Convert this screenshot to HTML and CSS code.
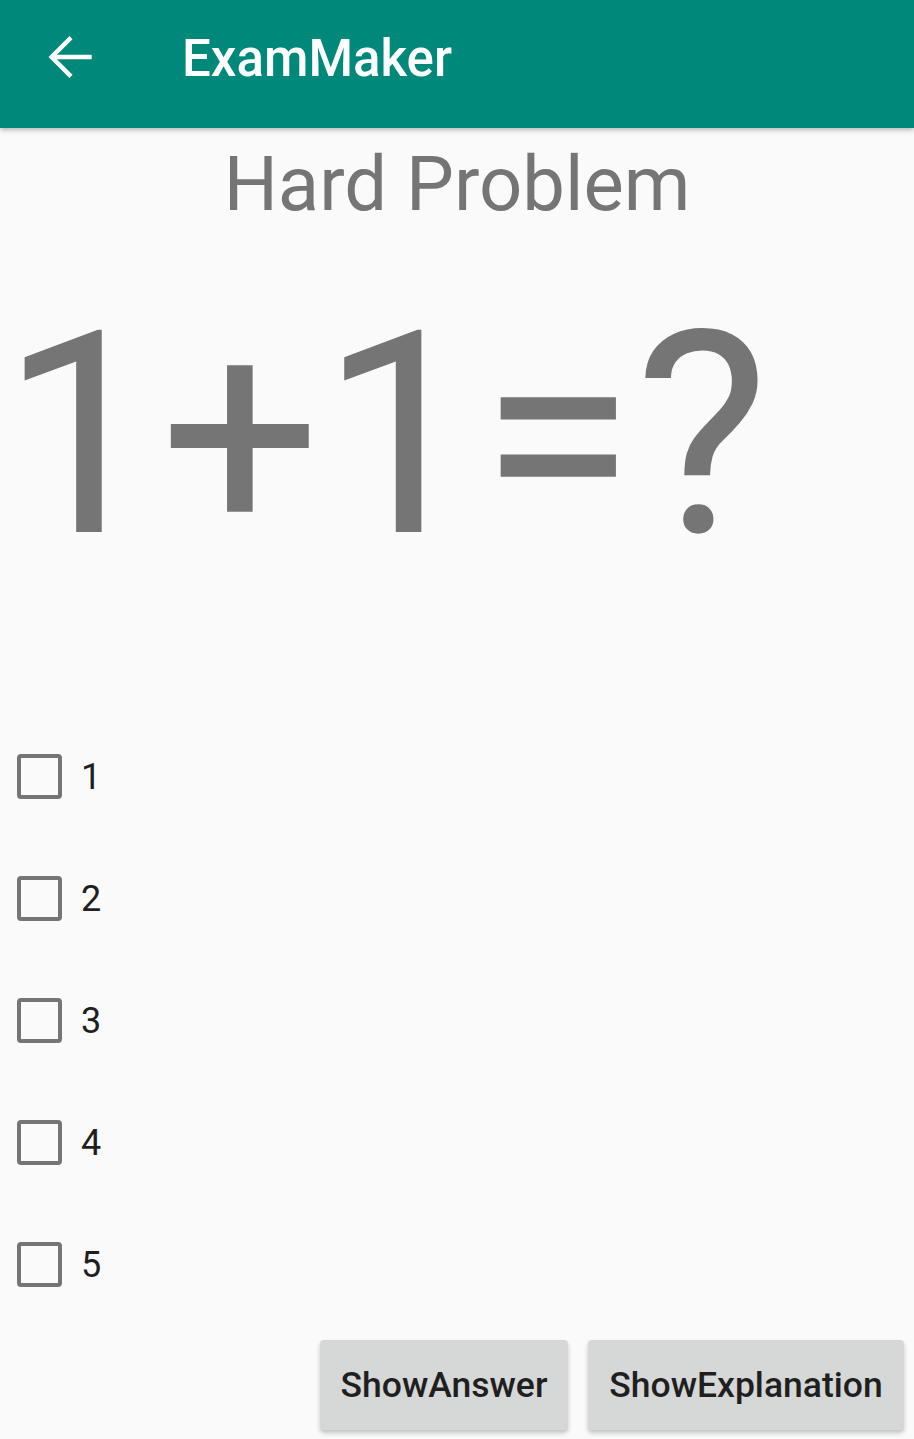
FILE: index.html
```html
<!DOCTYPE html>
<html>
<head>
<meta charset="utf-8">
<link rel="stylesheet" href="styles.css">
</head>
<body>
<div class="screen">
  <header class="appbar">
    <span class="back">
      <svg width="62" height="62" viewBox="0 0 24 24"><path d="M20 12H4.8M12 4.5L4.5 12L12 19.5" fill="none" stroke="#fff" stroke-width="1.7"/></svg>
    </span>
    <span class="title">ExamMaker</span>
  </header>
  <main class="content">
    <h1 class="heading">Hard Problem</h1>
    <div class="question">1+1=?</div>
    <ul class="options">
      <li class="option"><span class="box"></span><span class="label">1</span></li>
      <li class="option"><span class="box"></span><span class="label">2</span></li>
      <li class="option"><span class="box"></span><span class="label">3</span></li>
      <li class="option"><span class="box"></span><span class="label">4</span></li>
      <li class="option"><span class="box"></span><span class="label">5</span></li>
    </ul>
    <div class="actions">
      <button class="btn btn-answer">ShowAnswer</button>
      <button class="btn btn-expl">ShowExplanation</button>
    </div>
  </main>
</div>
</body>
</html>
```

FILE: styles.css
```css
html, body {
  margin: 0;
  padding: 0;
}
body {
  background: #fafafa;
  font-family: Roboto, "Liberation Sans", sans-serif;
  width: 914px;
  height: 1439px;
  overflow: hidden;
}
.screen {
  display: flex;
  flex-direction: column;
  height: 1439px;
}
.appbar {
  height: 128px;
  background: #00897b;
  display: flex;
  align-items: center;
  box-shadow: 0 2px 5px rgba(0,0,0,0.28);
  position: relative;
  z-index: 1;
  flex-shrink: 0;
}
.back {
  width: 62px;
  height: 62px;
  margin-left: 40px;
  margin-top: -14px;
  display: flex;
}
.title {
  margin-left: 80px;
  color: #fff;
  font-weight: 500;
  font-size: 51px;
  margin-top: -12px;
}
.content {
  flex: 1;
  display: flex;
  flex-direction: column;
}
.heading {
  margin: 0;
  text-align: center;
  font-weight: 400;
  font-size: 76px;
  line-height: 108px;
  color: #757575;
  padding-top: 2px;
}
.question {
  font-size: 283px;
  line-height: 330px;
  color: #757575;
  margin-left: 1px;
  margin-top: 32px;
}
.options {
  list-style: none;
  margin: 115px 0 0 0;
  padding: 0;
  display: flex;
  flex-direction: column;
}
.option {
  height: 122px;
  display: flex;
  align-items: center;
}
.box {
  width: 37px;
  height: 37px;
  border: 4px solid #757575;
  border-radius: 4px;
  margin-left: 17px;
}
.label {
  margin-left: 19px;
  font-size: 36px;
  color: #1f1f1f;
  margin-top: 2px;
}
.actions {
  display: flex;
  justify-content: flex-end;
  gap: 20px;
  padding-right: 10px;
  margin-top: 15px;
}
.btn {
  border: none;
  background: #d6d7d7;
  border-radius: 4px;
  height: 90px;
  font-family: Roboto, "Liberation Sans", sans-serif;
  font-weight: 500;
  font-size: 35.5px;
  color: #1f1f1f;
  box-shadow: 0 3px 4px rgba(0,0,0,0.22);
  padding: 0;
}
.btn-answer { width: 248px; }
.btn-expl { width: 316px; }
```
